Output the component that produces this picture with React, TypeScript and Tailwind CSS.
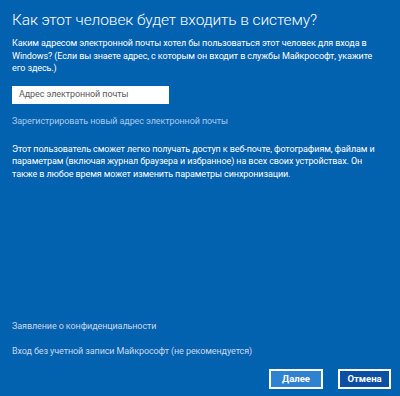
export default function App() {
  return (
    <div
      className="w-[400px] h-[396px] bg-[#0262b0] text-white flex flex-col px-3 overflow-hidden whitespace-nowrap"
      style={{ fontFamily: 'Roboto, "Liberation Sans", sans-serif' }}
    >
      <h1 className="mt-[9px] text-[15.5px] leading-[22px] font-light tracking-[-0.1px]">
        Как этот человек будет входить в систему?
      </h1>

      <p className="mt-[6px] text-[9px] leading-[12.5px] tracking-[-0.1px]">
        Каким адресом электронной почты хотел бы пользоваться этот человек для входа в
        <br />
        Windows? (Если вы знаете адрес, с которым он входит в службы Майкрософт, укажите
        <br />
        его здесь.)
      </p>

      <div className="mt-[11px] w-[157px] h-[18px] bg-white flex items-center px-[7px]">
        <span className="text-[9px] text-[#5a5a5a] tracking-[-0.1px]">Адрес электронной почты</span>
      </div>

      <a className="mt-[11px] text-[9px] leading-[12px] text-[#a9c9ee] tracking-[-0.1px]">
        Зарегистрировать новый адрес электронной почты
      </a>

      <p className="mt-[16px] text-[9px] leading-[12.5px] tracking-[-0.1px]">
        Этот пользователь сможет легко получать доступ к веб-почте, фотографиям, файлам и
        <br />
        параметрам (включая журнал браузера и избранное) на всех своих устройствах. Он
        <br />
        также в любое время может изменить параметры синхронизации.
      </p>

      <div className="flex-1" />

      <div className="text-[9px] leading-[12px] text-[#c9d8ec] tracking-[-0.1px]">Заявление о конфиденциальности</div>
      <div className="mt-[13px] text-[9px] leading-[12px] text-[#c9d8ec] tracking-[-0.1px]">
        Вход без учетной записи Майкрософт (не рекомендуется)
      </div>

      <div className="mt-[12px] mb-[7px] flex justify-end gap-[15px]">
        <button className="w-[54px] h-[20px] border-2 border-white bg-[#2f82d0] text-[9.5px] font-bold text-white flex items-center justify-center">
          Далее
        </button>
        <button className="w-[53px] h-[20px] border-2 border-white bg-[#0b4ea3] text-[9.5px] font-bold text-white flex items-center justify-center mr-[-3px]">
          Отмена
        </button>
      </div>
    </div>
  );
}
